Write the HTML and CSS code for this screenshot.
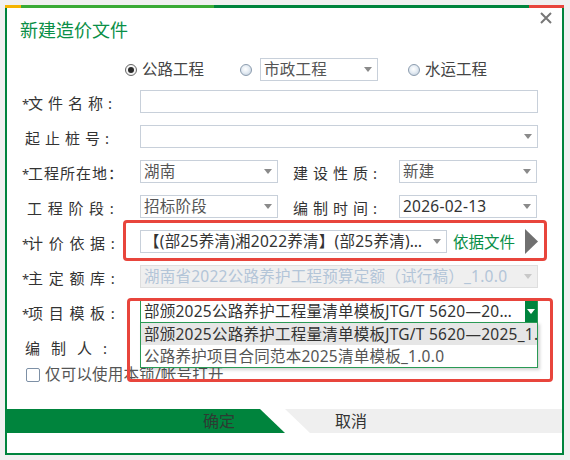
FILE: index.html
```html
<!DOCTYPE html>
<html lang="zh-CN">
<head>
<meta charset="utf-8">
<title>新建造价文件</title>
<link rel="stylesheet" href="styles.css">
</head>
<body>
<div class="window">
  <div class="topbar"><i class="seg seg-y"></i><i class="seg seg-lg"></i><i class="seg seg-dg"></i><i class="seg seg-r"></i></div>
  <div class="body">
    <svg class="close" width="12" height="12" viewBox="0 0 12 12"><path d="M1 1 L11 11 M11 1 L1 11" stroke="#777" stroke-width="2" fill="none"/></svg>
    <h1 class="title">新建造价文件</h1>

    <div class="radios">
      <span class="radio radio-on"><span class="dot"></span></span>
      <span class="rtext">公路工程</span>
      <span class="radio radio-2"></span>
      <div class="field sel-city">市政工程<i class="caret"></i></div>
      <span class="radio radio-3"></span>
      <span class="rtext">水运工程</span>
    </div>

    <div class="form">
      <div class="row">
        <div class="label sp5"><span class="star">*</span>文件名称:</div>
        <div class="field w-full"></div>
      </div>
      <div class="row">
        <div class="label sp5 nostar">起止桩号:</div>
        <div class="field w-full"><i class="caret"></i></div>
      </div>
      <div class="row">
        <div class="label sp1"><span class="star">*</span>工程所在地：</div>
        <div class="field w-half">湖南<i class="caret"></i></div>
        <div class="label rlabel sp5">建设性质:</div>
        <div class="field w-half">新建<i class="caret"></i></div>
      </div>
      <div class="row">
        <div class="label sp55 nostar2">工程阶段:</div>
        <div class="field w-half">招标阶段<i class="caret"></i></div>
        <div class="label rlabel sp5">编制时间:</div>
        <div class="field w-half dark">2026-02-13<i class="caret"></i></div>
      </div>
      <div class="row">
        <div class="label sp55"><span class="star">*</span>计价依据:</div>
        <div class="field w-basis dark"><span class="txt">【(部25养清)湘2022养清】(部25养清)湘2022养清</span><i class="caret"></i></div>
        <span class="link">依据文件</span>
        <svg class="play" width="13" height="25" viewBox="0 0 13 25"><polygon points="0,0 13,12.5 0,25" fill="#707070"/></svg>
      </div>
      <div class="row">
        <div class="label sp55"><span class="star">*</span>主定额库:</div>
        <div class="field w-full disabled">湖南省2022公路养护工程预算定额（试行稿）_1.0.0<i class="caret caret-light"></i></div>
      </div>
      <div class="row">
        <div class="label sp55"><span class="star">*</span>项目模板:</div>
        <div class="tpl-wrap">
          <div class="field w-full active dark"><span class="txt">部颁2025公路养护工程量清单模板JTG/T 5620—2025_1.0.0</span><span class="gbtn"><i class="caret caret-white"></i></span></div>
          <div class="list">
            <div class="item item-sel">部颁2025公路养护工程量清单模板JTG/T 5620—2025_1.0.0</div>
            <div class="item">公路养护项目合同范本2025清单模板_1.0.0</div>
          </div>
        </div>
      </div>
      <div class="row">
        <div class="label sp11 nostar">编制人:</div>
        <div class="field w-full"></div>
      </div>
    </div>

    <div class="check-row">
      <span class="checkbox"></span>
      <span class="ctext">仅可以使用本锁/帐号打开</span>
    </div>

    <div class="footer">
      <div class="btn btn-ok">确定</div>
      <div class="btn btn-cancel">取消</div>
    </div>

    <div class="hl hl-1"></div>
    <div class="hl hl-2"></div>
  </div>
</div>
</body>
</html>
```

FILE: styles.css
```css
body {
  margin: 0;
  background: #f0f0f0;
  font-family: "Noto Sans", "Noto Sans CJK SC", sans-serif;
  color: #333;
}

.window {
  margin: 5px 0 0 5px;
  width: 559px;
}

.topbar {
  display: flex;
  height: 3px;
}
.seg { display: block; height: 3px; }
.seg-y { width: 16px; background: #f5b400; }
.seg-lg { width: 193px; background: #3aaa35; }
.seg-dg { width: 315px; background: #00843d; }
.seg-r { flex: 1; background: #e8453c; }

.body {
  position: relative;
  height: 447px;
  box-sizing: border-box;
  border: 2px solid #00843d;
  border-top: 0;
  background: #fff;
  padding-top: 10px;
}

.close {
  position: absolute;
  left: 533px;
  top: 4px;
}

.title {
  margin: 0 0 0 13px;
  font-size: 18px;
  font-weight: normal;
  line-height: 24px;
  color: #0a8f47;
}

/* radio row */
.radios {
  display: flex;
  align-items: center;
  height: 23px;
  margin-top: 16px;
  padding-left: 118px;
  font-size: 15.5px;
  color: #444;
}
.radio {
  width: 12px;
  height: 12px;
  box-sizing: border-box;
  border-radius: 50%;
  border: 1px solid #8c9cae;
  background: radial-gradient(circle at 45% 40%, #ffffff 0%, #e6edf4 45%, #b9c8d8 100%);
  display: flex;
  align-items: center;
  justify-content: center;
  flex-shrink: 0;
}
.radio-on {
  border-color: #666;
  background: radial-gradient(circle at 45% 40%, #ffffff 0%, #e9e9e9 100%);
}
.dot {
  width: 6px;
  height: 6px;
  border-radius: 50%;
  background: #2a2a2a;
}
.rtext { margin-left: 5px; line-height: 23px; }
.radio-2 { margin-left: 36px; }
.sel-city { margin-left: 8px; width: 118px; }
.radio-3 { margin-left: 30px; }

/* form */
.form {
  margin-top: 9px;
  padding-left: 15px;
  display: flex;
  flex-direction: column;
  gap: 12px;
}
.row {
  display: flex;
  align-items: center;
  height: 23px;
}
.label {
  width: 118px;
  flex-shrink: 0;
  box-sizing: border-box;
  font-size: 15px;
  line-height: 23px;
  padding-top: 4px;
  white-space: nowrap;
  color: #333;
}
.star {
  display: inline-block;
  width: 6px;
  font-size: 13px;
  letter-spacing: 0;
}
.nostar { padding-left: 3px; }
.nostar2 { padding-left: 5px; }
.sp1 { letter-spacing: 1px; }
.sp5 { letter-spacing: 5px; }
.sp55 { letter-spacing: 5.7px; }
.sp11 { letter-spacing: 11px; }
.rlabel { width: 106px; margin-left: 15px; }

.field {
  height: 23px;
  box-sizing: border-box;
  border: 1px solid #c8d0da;
  background: #fff;
  display: flex;
  align-items: center;
  padding-left: 3px;
  font-size: 15.5px;
  letter-spacing: 0.25px;
  line-height: 21px;
  color: #555;
  white-space: nowrap;
  overflow: hidden;
  flex-shrink: 0;
}
.dark { color: #333; }
.w-full { width: 398px; }
.w-half { width: 138px; }
.w-basis { width: 307px; }

.txt {
  flex: 1;
  min-width: 0;
  overflow: hidden;
  text-overflow: ellipsis;
  white-space: nowrap;
}

.caret {
  margin-left: auto;
  margin-right: 5px;
  width: 0;
  height: 0;
  border-left: 4px solid transparent;
  border-right: 4px solid transparent;
  border-top: 5px solid #8a8a8a;
  flex-shrink: 0;
}
.txt + .caret { margin-left: 10px; }
.caret-light { border-top-color: #c8c8c8; }
.caret-white { margin: 0; border-top-color: #fff; }

.link {
  margin-left: 6px;
  font-size: 15.5px;
  color: #0a8f47;
  white-space: nowrap;
}
.play { margin-left: 10px; flex-shrink: 0; }

.disabled {
  background: #efefef;
  border-color: #dedede;
  color: #b3c5d8;
}

.tpl-wrap {
  position: relative;
  width: 398px;
  height: 23px;
  z-index: 2;
}
.active {
  border-color: #2a9a55;
}
.gbtn {
  width: 12px;
  height: 21px;
  margin-left: 6px;
  background: #00843d;
  display: flex;
  align-items: center;
  justify-content: center;
  flex-shrink: 0;
}

.list {
  position: absolute;
  left: 0;
  top: 22px;
  width: 398px;
  box-sizing: border-box;
  border: 1px solid #2a9a55;
  background: #fff;
  box-shadow: 2px 2px 3px rgba(0, 0, 0, 0.18);
}
.item {
  height: 22px;
  line-height: 22px;
  padding-left: 3px;
  font-size: 15.5px;
  letter-spacing: 0.25px;
  color: #555;
  white-space: nowrap;
  overflow: hidden;
}
.item-sel {
  background: #e6e6e6;
  color: #333;
}

/* checkbox */
.check-row {
  display: flex;
  align-items: center;
  height: 23px;
  margin-top: 5px;
  padding-left: 19px;
}
.checkbox {
  width: 14px;
  height: 14px;
  box-sizing: border-box;
  border: 1px solid #7d90a6;
  border-radius: 2px;
  background: #fff;
  flex-shrink: 0;
}
.ctext {
  margin-left: 5px;
  font-size: 15.5px;
  letter-spacing: 0.2px;
  color: #555;
  line-height: 23px;
}

/* footer */
.footer {
  display: flex;
  height: 24px;
  margin-top: 23px;
}
.btn {
  display: flex;
  align-items: center;
  font-size: 16px;
  line-height: 24px;
}
.btn-ok {
  width: 278px;
  flex-shrink: 0;
  padding-left: 196px;
  box-sizing: border-box;
  background: #00843d;
  color: #2d3b33;
  clip-path: polygon(0 0, 253px 0, 278px 100%, 0 100%);
}
.btn-cancel {
  flex: 1;
  padding-left: 50px;
  background: #efefef;
  color: #333;
  clip-path: polygon(0 0, 100% 0, 100% 100%, 25px 100%);
}

/* red annotation frames */
.hl {
  position: absolute;
  box-sizing: border-box;
  border: 3px solid #e8453c;
  border-radius: 4px;
  z-index: 5;
}
.hl-1 { left: 116px; top: 212px; width: 424px; height: 41px; }
.hl-2 { left: 120px; top: 290px; width: 426px; height: 84px; }
```
